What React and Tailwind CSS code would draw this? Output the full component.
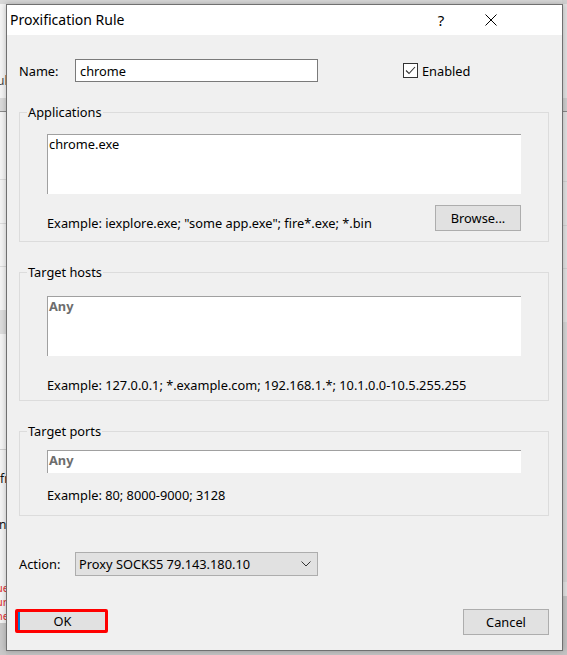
import React from "react";

function CloseGlyph() {
  return (
    <svg width="12" height="12" viewBox="0 0 12 12" fill="none">
      <path d="M0.5 0.5 L11.5 11.5 M11.5 0.5 L0.5 11.5" stroke="#000" strokeWidth="1" />
    </svg>
  );
}

function CheckGlyph() {
  return (
    <svg width="11" height="9" viewBox="0 0 11 9" fill="none">
      <path d="M1 4.5 L4 7.5 L10 1" stroke="#333" strokeWidth="1.1" />
    </svg>
  );
}

function Chevron() {
  return (
    <svg width="10" height="6" viewBox="0 0 10 6" fill="none">
      <path d="M0.5 0.5 L5 5 L9.5 0.5" stroke="#333" strokeWidth="1" />
    </svg>
  );
}

// the window behind the dialog, only the edges show
function Backdrop() {
  return (
    <div className="flex h-full w-full">
      <div className="w-[6px] h-full flex flex-col bg-[#f4f4f4] overflow-hidden text-[12px] leading-[14px]">
        <div className="h-[4px] bg-[#d8d8d8]" />
        <div className="h-[70px]" />
        <div className="h-[14px] text-[#444] -ml-[3px]">ul</div>
        <div className="h-[10px]" />
        <div className="h-[14px] bg-[#dadada] border-b border-[#8a8a8a]" />
        <div className="h-[68px] border-b border-[#dcdcdc]" />
        <div className="h-[44px] border-b border-[#dcdcdc]" />
        <div className="h-[43px] border-b border-[#dcdcdc]" />
        <div className="h-[43px]" />
        <div className="h-[24px] bg-[#dcdcdc]" />
        <div className="h-[116px] border-b border-[#d0d0d0]" />
        <div className="h-[22px]" />
        <div className="h-[14px] text-[#111]">fr</div>
        <div className="h-[32px]" />
        <div className="h-[14px] text-[#111] -ml-[1px]">n</div>
        <div className="h-[49px]" />
        <div className="h-[14px] leading-[13px] text-[#d33] -ml-[4px] text-[11px]">ue</div>
        <div className="h-[14px] leading-[13px] text-[#d33] -ml-[4px] text-[11px]">ur</div>
        <div className="h-[14px] leading-[13px] text-[#d33] -ml-[4px] text-[11px]">ne</div>
        <div className="flex-1 bg-[#c8c8c8]" />
      </div>
      <div className="flex-1 flex flex-col">
        <div className="h-[4px] bg-[#d8d8d8]" />
        <div className="flex-1" />
        <div className="h-[5px] bg-[#c4c4c4]" />
      </div>
      <div className="w-[5px] h-full flex flex-col bg-[#e2e2e2]">
        <div className="h-[4px] bg-[#d0d0d0]" />
        <div className="h-[94px]" />
        <div className="h-[14px] bg-[#cfcfcf] border-b border-[#8a8a8a]" />
        <div className="h-[70px] border-b border-[#d2d2d2]" />
        <div className="h-[44px] border-b border-[#d2d2d2]" />
        <div className="h-[43px] border-b border-[#d2d2d2]" />
        <div className="h-[53px]" />
        <div className="h-[260px] bg-[#d6d6d6]" />
        <div className="h-[14px] bg-[#e2e2e2]" />
        <div className="flex-1 bg-[#c4c4c4]" />
      </div>
    </div>
  );
}

function Group({ title, children, className = "" }) {
  return (
    <fieldset className={`border border-[#dcdcdc] ${className}`}>
      <legend className="-ml-[20px] px-[1px] leading-[16px]">{title}</legend>
      {children}
    </fieldset>
  );
}

export default function App() {
  return (
    <div className="relative w-[567px] h-[655px] overflow-hidden bg-[#e6e6e6] text-black font-['Noto_Sans',sans-serif] text-[12.8px]">
      <Backdrop />

      <div className="absolute left-[6px] top-[4px] w-[557px] h-[647px] border border-[#707070] bg-[#f0f0f0] flex flex-col shadow-[0_0_6px_rgba(0,0,0,0.25)]">
        {/* title bar */}
        <div className="h-[30px] bg-white flex items-center pl-[3px] shrink-0">
          <span className="text-[14px] leading-[20px]">Proxification Rule</span>
          <div className="ml-auto flex items-center pr-[48px]">
            <div className="w-[46px] flex justify-center text-[15px] leading-[20px]">?</div>
            <div className="w-[46px] h-[30px] flex items-center justify-center ml-[4px]">
              <CloseGlyph />
            </div>
          </div>
        </div>

        <div className="flex-1 flex flex-col pl-[12px] pr-[13px] pt-[24px] leading-[16px]">
          {/* name row */}
          <div className="flex items-center h-[23px]">
            <span className="w-[56px]">Name:</span>
            <div className="w-[243px] h-[23px] bg-white border border-[#7a7a7a] flex items-center px-[4px]">
              chrome
            </div>
            <label className="ml-[85px] flex items-center gap-[4px]">
              <span className="w-[15px] h-[15px] bg-white border border-[#333] flex items-center justify-center">
                <CheckGlyph />
              </span>
              <span>Enabled</span>
            </label>
          </div>

          <Group title="Applications" className="mt-[22px] pl-[27px] pr-[27px] pt-[14px] pb-[10px]">
            <div className="h-[60px] bg-white border-t border-l border-[#a0a0a0] pl-[1px] pt-[1px]">
              chrome.exe
            </div>
            <div className="mt-[11px] flex items-center justify-between">
              <span className="mt-[10px]">Example: iexplore.exe; "some app.exe"; fire*.exe; *.bin</span>
              <button className="w-[86px] h-[26px] bg-[#e1e1e1] border border-[#adadad]">Browse...</button>
            </div>
          </Group>

          <Group title="Target hosts" className="mt-[22px] pl-[27px] pr-[27px] pt-[16px] pb-[7px]">
            <div className="h-[60px] bg-white border-t border-l border-[#a0a0a0] pl-[1px] pt-[1px] font-bold text-[#6d6d6d]">
              Any
            </div>
            <div className="mt-[21px]">Example: 127.0.0.1; *.example.com; 192.168.1.*; 10.1.0.0-10.5.255.255</div>
          </Group>

          <Group title="Target ports" className="mt-[22px] pl-[27px] pr-[27px] pt-[11px] pb-[12px]">
            <div className="h-[23px] bg-white border-t border-l border-[#a0a0a0] pl-[1px] pt-[1px] font-bold text-[#6d6d6d]">
              Any
            </div>
            <div className="mt-[14px]">Example: 80; 8000-9000; 3128</div>
          </Group>

          {/* action */}
          <div className="mt-[36px] flex items-center h-[24px]">
            <span className="w-[56px]">Action:</span>
            <div className="w-[243px] h-[24px] bg-[#e1e1e1] border border-[#adadad] flex items-center pl-[3px] pr-[6px]">
              <span>Proxy SOCKS5 79.143.180.10</span>
              <span className="ml-auto"><Chevron /></span>
            </div>
          </div>

          {/* buttons */}
          <div className="mt-[33px] flex items-start justify-between">
            <div className="-ml-[4px] border-[3px] border-[#ff0000] rounded-[2px]">
              <button className="w-[87px] h-[18px] bg-[#e1e1e1] border-l-2 border-[#0078d7] leading-[18px]">OK</button>
            </div>
            <button className="w-[86px] h-[26px] bg-[#e1e1e1] border border-[#adadad]">Cancel</button>
          </div>
        </div>
      </div>
    </div>
  );
}
